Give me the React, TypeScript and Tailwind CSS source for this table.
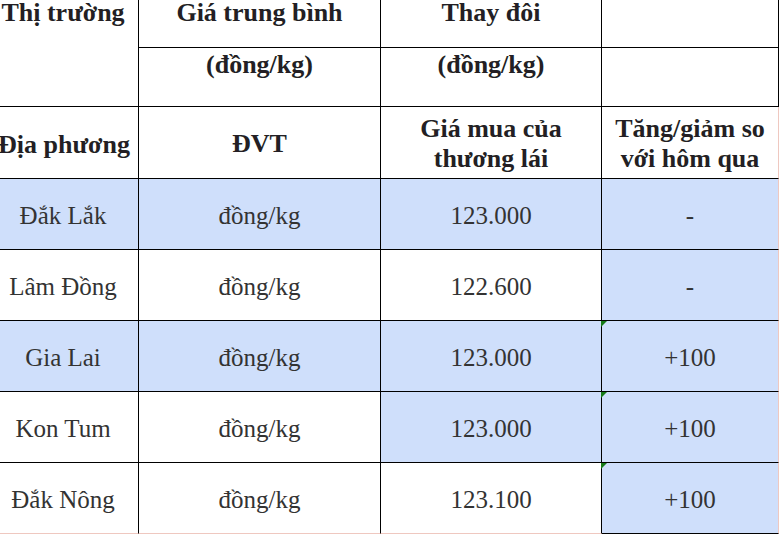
type Row = {
  place: string;
  price: string;
  change: string;
  blue: [boolean, boolean, boolean, boolean];
  mark?: boolean;
};

const rows: Row[] = [
  { place: 'Đắk Lắk', price: '123.000', change: '-', blue: [true, true, true, true] },
  { place: 'Lâm Đồng', price: '122.600', change: '-', blue: [false, false, false, true] },
  { place: 'Gia Lai', price: '123.000', change: '+100', blue: [true, true, true, true], mark: true },
  { place: 'Kon Tum', price: '123.000', change: '+100', blue: [false, false, true, true], mark: true },
  { place: 'Đắk Nông', price: '123.100', change: '+100', blue: [false, false, false, true], mark: true },
];

function Mark() {
  return (
    <span className="absolute top-0 -left-px w-0 h-0 border-t-[6px] border-t-[#167a16] border-r-[6px] border-r-transparent" />
  );
}

export default function App() {
  return (
    <div className="w-[779px] h-[537px] overflow-hidden bg-white font-['Liberation_Serif','Times_New_Roman',serif]">
      <div className="ml-[-12px] mt-[-4px] w-[791px] grid grid-cols-[151px_242px_221px_177px] grid-rows-[52px_59px_72px_71px_71px_71px_71px_71px] text-[25px] leading-[30px]">
        {/* header row 1 + 2 */}
        <div className="row-span-2 border-r border-b border-black pt-[2px] text-center text-[26px] font-bold text-[#231f24]">
          Thị trường
        </div>
        <div className="border-r border-b border-black pt-[2px] text-center text-[26px] font-bold text-[#231f24]">
          Giá trung bình
        </div>
        <div className="border-r border-b border-black pt-[2px] text-center text-[26px] font-bold text-[#231f24]">
          Thay đôi
        </div>
        <div className="border-r border-b border-black" />
        <div className="border-r border-b border-black pt-[2px] text-center text-[26px] font-bold text-[#231f24]">
          (đồng/kg)
        </div>
        <div className="border-r border-b border-black pt-[2px] text-center text-[26px] font-bold text-[#231f24]">
          (đồng/kg)
        </div>
        <div className="border-r border-b border-black" />

        {/* header row 3 */}
        <div className="border-r border-b border-black flex items-center justify-center pt-[4px] pl-[2px] text-[26px] font-bold text-[#231f24]">
          Địa phương
        </div>
        <div className="border-r border-b border-black flex items-center justify-center pt-[2px] text-[26px] font-bold text-[#231f24]">
          ĐVT
        </div>
        <div className="border-r border-b border-black flex items-center justify-center pt-[2px] text-center text-[26px] font-bold text-[#231f24]">
          Giá mua của
          <br />
          thương lái
        </div>
        <div className="border-r border-r-[#efc8c0] border-b border-black flex items-center justify-center pt-[2px] text-center text-[26px] font-bold text-[#231f24]">
          Tăng/giảm so
          <br />
          với hôm qua
        </div>

        {/* data */}
        {rows.map((r, i) => {
          const last = i === rows.length - 1;
          const bottom = last ? 'border-b-[#efc8c0]' : 'border-b-black';
          return [
            <div
              key={`${i}a`}
              className={`border-r border-b border-r-black ${bottom} flex items-center justify-center pt-[3px] text-[#333] ${r.blue[0] ? 'bg-[#cfdffb]' : 'bg-white'}`}
            >
              {r.place}
            </div>,
            <div
              key={`${i}b`}
              className={`border-r border-b border-r-black ${bottom} flex items-center justify-center pt-[3px] text-[#333] ${r.blue[1] ? 'bg-[#cfdffb]' : 'bg-white'}`}
            >
              đồng/kg
            </div>,
            <div
              key={`${i}c`}
              className={`border-r border-b border-r-black ${bottom} flex items-center justify-center pt-[3px] text-[#333] ${r.blue[2] ? 'bg-[#cfdffb]' : 'bg-white'}`}
            >
              {r.price}
            </div>,
            <div
              key={`${i}d`}
              className={`relative border-r border-b border-r-[#efc8c0] border-b-black flex items-center justify-center pt-[3px] text-[#333] ${r.blue[3] ? 'bg-[#cfdffb]' : 'bg-white'}`}
            >
              {r.mark && <Mark />}
              {r.change}
            </div>,
          ];
        })}
      </div>
    </div>
  );
}
